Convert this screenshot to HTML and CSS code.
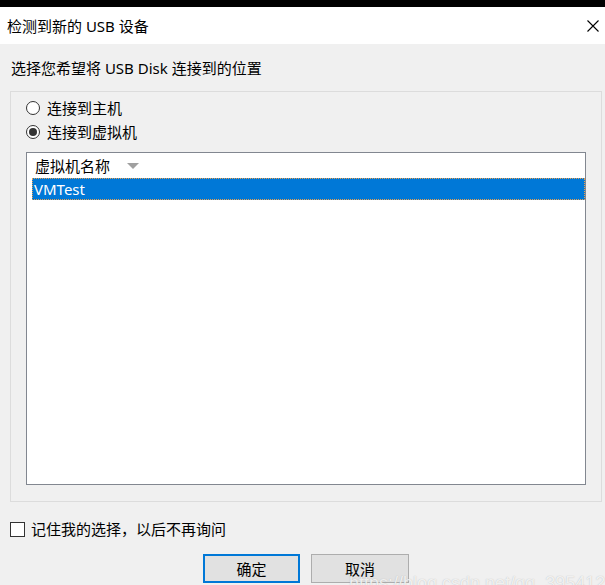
FILE: index.html
```html
<!DOCTYPE html>
<html lang="zh-CN">
<head>
<meta charset="utf-8">
<title>检测到新的 USB 设备</title>
<link rel="stylesheet" href="styles.css">
</head>
<body>
<div class="topbar"></div>
<div class="titlebar">
  <span class="title">检测到新的 USB 设备</span>
  <svg class="close" width="12" height="12" viewBox="0 0 12 12"><path d="M0.5 0.5 L11.5 11.5 M11.5 0.5 L0.5 11.5" stroke="#000" stroke-width="1.1" fill="none"/></svg>
</div>
<div class="content">
  <div class="prompt">选择您希望将 USB Disk 连接到的位置</div>
  <div class="group">
    <div class="radio-row"><span class="radio"></span><span>连接到主机</span></div>
    <div class="radio-row second"><span class="radio checked"></span><span>连接到虚拟机</span></div>
    <div class="list">
      <div class="list-header"><span>虚拟机名称</span><span class="sort-arrow"></span></div>
      <div class="list-item selected">VMTest</div>
    </div>
  </div>
  <div class="check-row"><span class="checkbox"></span><span>记住我的选择，以后不再询问</span></div>
  <div class="buttons">
    <div class="btn default">确定</div>
    <div class="btn">取消</div>
  </div>
</div>
<div class="watermark">https://blog.csdn.net/qq_39541254</div>
</body>
</html>
```
FILE: styles.css
```css
html, body {
  margin: 0;
  padding: 0;
}
body {
  width: 605px;
  height: 585px;
  overflow: hidden;
  position: relative;
  background: #f0f0f0;
  font-family: "Noto Sans", "Noto Sans CJK SC", sans-serif;
  font-size: 15px;
  color: #000;
}
.topbar {
  height: 7px;
  background: #000;
}
.titlebar {
  height: 37px;
  background: #fff;
  display: flex;
  align-items: center;
  justify-content: space-between;
  padding: 0 6px 0 7px;
  line-height: 20px;
}
.close {
  display: block;
  margin-top: 1px;
}
.content {
  padding-top: 14px;
}
.prompt {
  line-height: 20px;
  padding-left: 11px;
}
.group {
  margin: 13px 3px 0 10px;
  border: 1px solid #dcdcdc;
  height: 411px;
  box-sizing: border-box;
  padding: 6px 15px 0 15px;
}
.radio-row {
  display: flex;
  align-items: center;
  line-height: 20px;
}
.radio-row.second {
  margin-top: 4px;
}
.radio {
  width: 14px;
  height: 14px;
  box-sizing: border-box;
  border: 1px solid #333;
  border-radius: 50%;
  background: #fff;
  margin-right: 7px;
  display: flex;
  align-items: center;
  justify-content: center;
}
.radio.checked::after {
  content: "";
  width: 8px;
  height: 8px;
  border-radius: 50%;
  background: #333;
}
.list {
  margin-top: 10px;
  height: 333px;
  box-sizing: border-box;
  border: 1px solid #828790;
  background: #fff;
}
.list-header {
  height: 25px;
  display: flex;
  align-items: center;
  padding-left: 8px;
  line-height: 20px;
}
.sort-arrow {
  width: 0;
  height: 0;
  border-left: 6px solid transparent;
  border-right: 6px solid transparent;
  border-top: 6px solid #a0a0a0;
  margin-left: 17px;
  margin-top: 1px;
}
.list-item {
  margin-left: 5px;
  height: 22px;
  line-height: 20px;
  box-sizing: border-box;
  padding-left: 1px;
}
.list-item.selected {
  background: #0078d7;
  color: #fff;
  border: 1px dotted #e8a050;
}
.check-row {
  display: flex;
  align-items: center;
  line-height: 20px;
  margin-top: 17px;
  padding-left: 10px;
}
.checkbox {
  width: 15px;
  height: 15px;
  box-sizing: border-box;
  border: 1px solid #333;
  background: #fff;
  margin-right: 6px;
}
.buttons {
  display: flex;
  gap: 11px;
  margin-top: 15px;
  padding-left: 203px;
}
.btn {
  width: 98px;
  height: 29px;
  box-sizing: border-box;
  border: 1px solid #adadad;
  background: #e1e1e1;
  display: flex;
  align-items: center;
  justify-content: center;
  line-height: 20px;
}
.btn.default {
  width: 97px;
  border: 2px solid #0078d7;
}
.watermark {
  position: absolute;
  left: 349px;
  top: 573px;
  font-family: "Liberation Sans", sans-serif;
  font-size: 18px;
  line-height: 20px;
  color: rgba(255, 255, 255, 0.8);
  text-shadow: 0 0 1px rgba(140, 140, 140, 0.6);
  white-space: nowrap;
}
```
